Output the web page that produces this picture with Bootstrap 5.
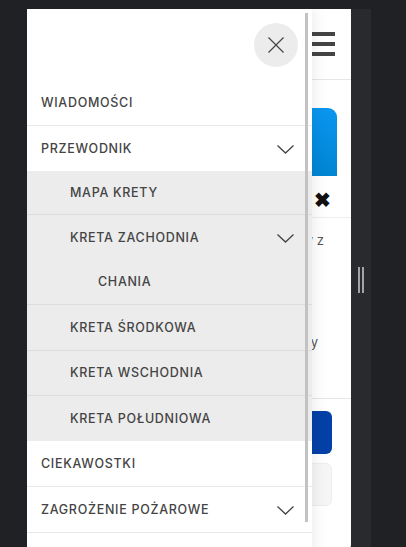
<!DOCTYPE html>
<html lang="pl">
<head>
  <meta charset="UTF-8" />
  <meta name="viewport" content="width=device-width, initial-scale=1.0"/>
  <title>Kreta - menu</title>
  <link href="https://cdn.jsdelivr.net/npm/bootstrap@5.3.0/dist/css/bootstrap.min.css" rel="stylesheet"/>
  <style>
    html, body { height: 547px; overflow: hidden; background: #202124; }
    .shell { height: 556px; padding: 9px 35px 0 27px; }
    .device { width: 324px; background: #fff; border-bottom-right-radius: 12px; overflow: hidden; }
    .handle-pane { width: 20px; background: #292a2d; }
    .grip { width: 6px; height: 26px; margin-top: 258px; border-left: 2px solid #a3a4a6; border-right: 2px solid #a3a4a6; }

    /* page behind the drawer */
    .page-head { height: 71px; border-bottom: 1px solid #e6e6e6; padding: 23px 16px 0 0; }
    .burger { width: 23px; height: 24px; }
    .burger span { height: 4px; background: #444; }
    .promo { height: 68px; margin: 28px 14px 0 0; background: linear-gradient(#0a96f0, #0085d2); border-top-right-radius: 9px; }
    .promo-foot { height: 42px; padding: 10px 20px 0 0; border-bottom: 1px solid #eee; font: 800 20px/28px "Liberation Sans", sans-serif; color: #111; }
    .page-text { height: 181px; border-bottom: 1px solid #e6e6e6; padding: 12px 27px 0 0; font: 13px/20px Inter, sans-serif; color: #555; }
    .page-text p:first-child { margin: 0 0 82px; }
    .page-text p:last-child { margin: 0 6px 0 0; }
    .page-btn { height: 43px; margin: 12px 19px 0 0; background: #0540a8; border-radius: 0 6px 6px 0; }
    .page-box { height: 43px; margin: 9px 19px 0 0; background: #f6f6f6; border: 1px solid #eee; border-radius: 0 6px 6px 0; }

    /* drawer */
    .drawer { position: absolute; top: 0; bottom: 0; left: 0; width: 285px; background: #fff; box-shadow: 0 0 16px rgba(0,0,0,.1); }
    .scroll-thumb { position: absolute; top: 4px; left: 278px; width: 3px; height: 509px; background: #c2c2c2; }
    .drawer-top { height: 72px; padding: 14px 14px 0 0; }
    .close-round { width: 44px; height: 44px; border-radius: 50%; background: #ececec; border: 0; padding: 0; }
    .drawer-link { font: 500 12.5px/18px Inter, sans-serif; letter-spacing: .7px; color: #444; text-decoration: none; padding: 0 14px; border-bottom: 1px solid #e8e8e8; }
    .drawer-link svg { margin: 2px 4px 0 0; }
    .sub-list { background: #ececec; }
    .sub-list .drawer-link { padding-left: 43px; border-bottom-color: #dcdcdc; }
    .sub-list .drawer-link.deep { padding-left: 71px; }
    .row-44 { height: 44px; }
    .row-45 { height: 45px; }
    .row-46 { height: 46px; }
  </style>
</head>
<body>
  <div class="shell d-flex">
    <div class="device position-relative flex-shrink-0">
      <div class="page-head d-flex justify-content-end">
        <div class="burger d-flex flex-column justify-content-between">
          <span></span><span></span><span></span>
        </div>
      </div>
      <div class="promo"></div>
      <div class="promo-foot text-end">✖</div>
      <div class="page-text text-end">
        <p>y z</p>
        <p>y</p>
      </div>
      <div class="page-btn"></div>
      <div class="page-box"></div>

      <div class="drawer">
        <div class="drawer-top d-flex justify-content-end">
          <button class="close-round d-flex align-items-center justify-content-center" aria-label="Zamknij">
            <svg width="16" height="16" viewBox="0 0 16 16" fill="none" stroke="#444" stroke-width="1.2"><path d="M.5.5l15 15M15.500.5l-15 15"/></svg>
          </button>
        </div>
        <nav class="d-flex flex-column">
          <a href="#" class="drawer-link row-45 d-flex align-items-center">WIADOMOŚCI</a>
          <a href="#" class="drawer-link row-45 d-flex align-items-center justify-content-between border-0">PRZEWODNIK
            <svg width="17" height="9" viewBox="0 0 17 9" fill="none" stroke="#444" stroke-width="1.3"><path d="M.5.5l8 7.500 8-7.500"/></svg>
          </a>
          <div class="sub-list d-flex flex-column">
            <a href="#" class="drawer-link row-44 d-flex align-items-center">MAPA KRETY</a>
            <a href="#" class="drawer-link row-45 d-flex align-items-center justify-content-between border-0">KRETA ZACHODNIA
              <svg width="17" height="9" viewBox="0 0 17 9" fill="none" stroke="#444" stroke-width="1.3"><path d="M.5.5l8 7.500 8-7.500"/></svg>
            </a>
            <a href="#" class="drawer-link deep row-45 d-flex align-items-center">CHANIA</a>
            <a href="#" class="drawer-link row-46 d-flex align-items-center">KRETA ŚRODKOWA</a>
            <a href="#" class="drawer-link row-45 d-flex align-items-center">KRETA WSCHODNIA</a>
            <a href="#" class="drawer-link row-45 d-flex align-items-center border-0">KRETA POŁUDNIOWA</a>
          </div>
          <a href="#" class="drawer-link row-46 d-flex align-items-center">CIEKAWOSTKI</a>
          <a href="#" class="drawer-link row-46 d-flex align-items-center justify-content-between">ZAGROŻENIE POŻAROWE
            <svg width="17" height="9" viewBox="0 0 17 9" fill="none" stroke="#444" stroke-width="1.3"><path d="M.5.5l8 7.500 8-7.500"/></svg>
          </a>
        </nav>
        <div class="scroll-thumb"></div>
      </div>
    </div>
    <div class="handle-pane d-flex justify-content-center flex-shrink-0">
      <div class="grip"></div>
    </div>
  </div>
  <script src="https://cdn.jsdelivr.net/npm/bootstrap@5.3.0/dist/js/bootstrap.bundle.min.js"></script>
</body>
</html>
